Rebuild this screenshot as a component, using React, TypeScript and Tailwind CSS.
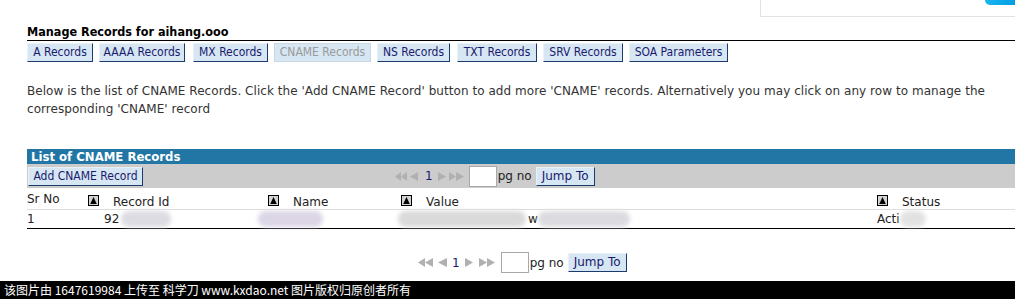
import React from "react";

const SortIcon = () => (
  <svg width="11" height="11" viewBox="0 0 11 11" className="shrink-0">
    <rect x="0" y="0" width="11" height="11" fill="#000" />
    <rect x="1" y="1" width="9" height="9" fill="#d4d4d4" />
    <polygon points="5.5,2 8.8,9 2.2,9" fill="#000" />
  </svg>
);

const Tri = ({ dir, w }: { dir: "l" | "r"; w: number }) => (
  <svg width={w} height="9" viewBox={`0 0 ${w} 9`}>
    {dir === "l" ? (
      <polygon points={`0,4.5 ${w},0 ${w},9`} fill="#b0b0b0" />
    ) : (
      <polygon points={`${w},4.5 0,0 0,9`} fill="#b0b0b0" />
    )}
  </svg>
);

const Pager = ({ big }: { big?: boolean }) => (
  <div className="flex items-center">
    <Tri dir="l" w={big ? 7 : 6} />
    <Tri dir="l" w={big ? 8 : 6} />
    <span className={big ? "ml-[5px]" : "ml-[3px]"}>
      <Tri dir="l" w={big ? 9 : 8} />
    </span>
    <span className={big ? "ml-[5px] text-[#1a1a6e]" : "ml-[7px] text-[#1a1a6e]"}>1</span>
    <span className="ml-[5px]">
      <Tri dir="r" w={8} />
    </span>
    <span className={big ? "ml-[6px] flex" : "ml-[3px] flex"}>
      <Tri dir="r" w={big ? 8 : 7} />
      <Tri dir="r" w={8} />
    </span>
    <div className={`${big ? "ml-[6px]" : "ml-[5px]"} h-[21px] w-[28px] border border-[#a8a8a8] bg-white`} />
    <span className="ml-[1px] text-[12px] text-[#222]">pg no</span>
    <button className="ml-[4px] h-[19px] w-[59px] border border-t-[#e8f0f8] border-l-[#e8f0f8] border-b-[#1c3a6e] border-r-[#1c3a6e] bg-[#d6e6f2] text-[12px] text-[#1a1a6e] leading-[17px]">
      Jump To
    </button>
  </div>
);

const tabs: { label: string; w: string; ml: string; disabled?: boolean }[] = [
  { label: "A Records", w: "w-[66px]", ml: "ml-0" },
  { label: "AAAA Records", w: "w-[86px]", ml: "ml-[6px]" },
  { label: "MX Records", w: "w-[75px]", ml: "ml-[8px]" },
  { label: "CNAME Records", w: "w-[97px]", ml: "ml-[6px]", disabled: true },
  { label: "NS Records", w: "w-[73px]", ml: "ml-[6px]" },
  { label: "TXT Records", w: "w-[80px]", ml: "ml-[7px]" },
  { label: "SRV Records", w: "w-[80px]", ml: "ml-[6px]" },
  { label: "SOA Parameters", w: "w-[99px]", ml: "ml-[6px]" },
];

const Blur = ({ w, ml, c = "#d8d4e0" }: { w: string; ml: string; c?: string }) => (
  <div className={`${w} ${ml} h-[16px] rounded-full blur-[2px]`} style={{ background: c }} />
);

export default function App() {
  return (
    <div className="relative h-[299px] w-[1015px] overflow-hidden bg-white font-['DejaVu_Sans',sans-serif] text-[12px] text-[#222]">
      {/* top right box */}
      <div className="flex h-[17px] justify-end">
        <div className="flex h-[17px] w-[255px] justify-end border-b border-l border-[#e2e2e2]">
          <div className="h-[5px] w-[30px] rounded-bl-[6px] bg-gradient-to-r from-[#19b4f0] to-[#009fe3]" />
        </div>
      </div>

      <div className="pl-[27px]">
        <div className="h-[24px] border-b border-black pt-[7px] font-['DejaVu_Sans_Condensed',sans-serif] text-[12.5px] font-bold leading-[16px] text-black">
          Manage Records for aihang.ooo
        </div>

        <div className="mt-[2px] flex h-[19px] font-['DejaVu_Sans_Condensed',sans-serif]">
          {tabs.map((t) => (
            <button
              key={t.label}
              className={`${t.w} ${t.ml} h-[19px] border leading-[17px] ${
                t.disabled
                  ? "border-[#c8d8e4] bg-[#d6e6f2] text-[#9a9a9a]"
                  : "border-t-[#e8f0f8] border-l-[#e8f0f8] border-b-[#1c3a6e] border-r-[#1c3a6e] bg-[#d6e6f2] text-[#1a1a6e]"
              }`}
            >
              {t.label}
            </button>
          ))}
        </div>

        <p className="mt-[20px] leading-[18px] tracking-[0.05px] text-[#333]">
          <span className="whitespace-nowrap">
            Below is the list of CNAME Records. Click the 'Add CNAME Record' button to add more 'CNAME' records. Alternatively you may click on any row to manage the
          </span>
          <br />
          corresponding 'CNAME' record
        </p>

        <div className="mt-[31px] h-[15px] bg-[#2176a5] pl-[4px] font-['DejaVu_Sans_Condensed',sans-serif] text-[13px] font-bold leading-[15px] text-white">
          List of CNAME Records
        </div>

        <div className="flex h-[24px] items-center bg-[#cccccc]">
          <button className="ml-[1px] h-[19px] w-[115px] border border-t-[#e8f0f8] border-l-[#e8f0f8] border-b-[#1c3a6e] border-r-[#1c3a6e] bg-[#d6e6f2] font-['DejaVu_Sans_Condensed',sans-serif] text-[#1a1a6e] leading-[17px]">
            Add CNAME Record
          </button>
          <div className="ml-[252px]">
            <Pager />
          </div>
        </div>

        {/* header row */}
        <div className="flex h-[22px] border-b border-[#dddddd]">
          <div className="w-[61px] pt-[4px] leading-[14px]">Sr No</div>
          <div className="flex w-[180px] items-start pt-[7px]">
            <SortIcon />
            <span className="ml-[14px] leading-[14px]">Record Id</span>
          </div>
          <div className="flex w-[133px] items-start pt-[7px]">
            <SortIcon />
            <span className="ml-[14px] leading-[14px]">Name</span>
          </div>
          <div className="flex w-[476px] items-start pt-[7px]">
            <SortIcon />
            <span className="ml-[14px] leading-[14px]">Value</span>
          </div>
          <div className="flex items-start pt-[7px]">
            <SortIcon />
            <span className="ml-[14px] leading-[14px]">Status</span>
          </div>
        </div>

        {/* data row */}
        <div className="flex h-[19px] items-center border-b border-black">
          <div className="w-[77px] leading-[14px]">1</div>
          <div className="flex w-[154px] items-center">
            <span className="leading-[14px]">92</span>
            <Blur w="w-[50px]" ml="ml-[2px]" c="#dcdce2" />
          </div>
          <div className="flex w-[140px] items-center">
            <Blur w="w-[65px]" ml="ml-0" c="#dcd6e6" />
          </div>
          <div className="flex w-[479px] items-center">
            <Blur w="w-[128px]" ml="ml-0" c="#dadada" />
            <span className="ml-[2px] leading-[14px]">w</span>
            <Blur w="w-[92px]" ml="ml-0" c="#dcdce0" />
          </div>
          <div className="flex items-center">
            <span className="leading-[14px]">Acti</span>
            <Blur w="w-[26px]" ml="ml-0" c="#e2e2e2" />
          </div>
        </div>

        <div className="mt-[23px] flex h-[21px] items-center">
          <div className="ml-[391px]">
            <Pager big />
          </div>
        </div>
      </div>

      <div className="absolute bottom-0 left-0 h-[18px] w-[1015px] bg-black pl-[4px] font-['Noto_Sans_CJK_SC',sans-serif] text-[12px] leading-[18px] whitespace-pre text-white">
        {"该图片由 1647619984 上传至 科学刀 www.kxdao.net 图片版权归原创者所有"}
      </div>
    </div>
  );
}
